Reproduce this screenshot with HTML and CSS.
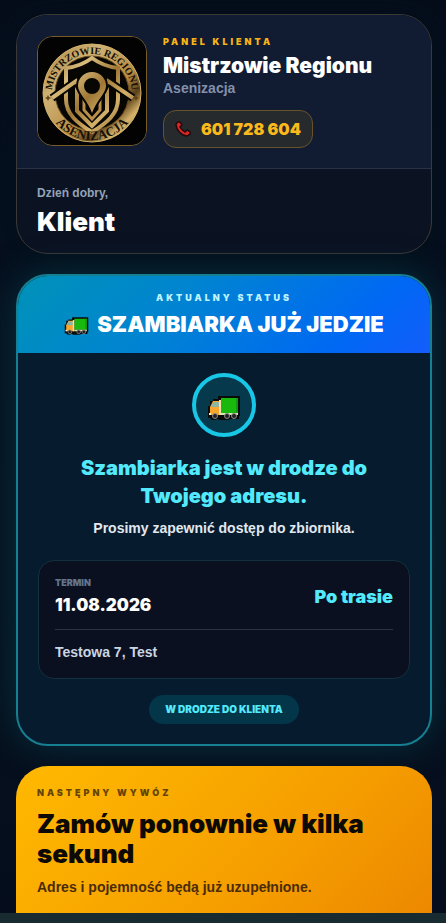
FILE: index.html
```html
<!DOCTYPE html>
<html lang="pl">
<head>
    <meta charset="UTF-8">
    <meta name="viewport" content="width=device-width, initial-scale=1.0">
    <title>Panel klienta - Mistrzowie Regionu</title>
    <link rel="stylesheet" href="styles.css">
</head>
<body>

    <!-- shared truck icon -->
    <svg class="sprite" aria-hidden="true">
        <symbol id="truck" viewBox="0 0 34 26">
            <path d="M1 11h2V6h3V4h5V1h22v20h-1v3h-9l-1 1H12l-1-1H10l-2 1H5l-2-2H1z" fill="#080b08"/>
            <path d="M14 3h17v15H14z" fill="#18b90c"/>
            <path d="M29 3h2v15h-2z" fill="#0c9a12"/>
            <path d="M3 12l3-6h7v14H3z" fill="#f8a72c"/>
            <path d="M6 7h6v5H4z" fill="#8db6a2"/>
            <path d="M12 5h2v15h-2z" fill="#f4dfaa"/>
            <path d="M14 18h17v2H14z" fill="#d5e8ad"/>
            <path d="M2 18h2v2H2z" fill="#fff0bd"/>
            <g fill="#222" stroke="#8d898e" stroke-width="1">
                <circle cx="8" cy="21" r="2.5"/>
                <circle cx="20" cy="21" r="2.5"/>
                <circle cx="27" cy="21" r="2.5"/>
            </g>
        </symbol>
    </svg>

    <main class="container">
        <header class="card client-card">
            <div class="brand">
                <svg class="logo" viewBox="0 0 108 108" role="img" aria-label="Mistrzowie Regionu Asenizacja">
                    <defs>
                        <linearGradient id="gold" gradientUnits="userSpaceOnUse" x1="15" y1="20" x2="90" y2="95">
                            <stop offset="0" stop-color="#a07a38"/>
                            <stop offset=".25" stop-color="#d9bc7c"/>
                            <stop offset=".5" stop-color="#9f7734"/>
                            <stop offset=".72" stop-color="#d3b06a"/>
                            <stop offset="1" stop-color="#80591f"/>
                        </linearGradient>
                        <linearGradient id="ring" x1="0" y1="0" x2="1" y2="1">
                            <stop offset="0" stop-color="#a98646"/>
                            <stop offset=".3" stop-color="#cfb275"/>
                            <stop offset=".6" stop-color="#b78c42"/>
                            <stop offset=".72" stop-color="#5a401b"/>
                            <stop offset=".82" stop-color="#d5b269"/>
                            <stop offset="1" stop-color="#94702f"/>
                        </linearGradient>
                        <path id="arcTop" d="M14 57a40 40 0 0 1 80 0"/>
                        <path id="arcBottom" d="M7 56a47 47 0 0 0 94 0"/>
                    </defs>
                    <rect width="108" height="108" fill="#030303"/>
                    <circle cx="54" cy="56" r="49" fill="url(#ring)" stroke="#d3b26c"/>
                    <circle cx="54" cy="56" r="37" fill="#080603" stroke="#6c4d1d"/>
                    <!-- shield -->
                    <path d="M54 21c8 6 17 9 26 10v31c0 15-11 24-26 33-15-9-26-18-26-33V31c9-1 18-4 26-10z" fill="#080603" stroke="url(#gold)" stroke-width="4"/>
                    <path d="M39 47v27l15 15 15-15V47" fill="none" stroke="url(#gold)" stroke-width="4"/>
                    <path d="M46 59v14l8 9 8-9V59" fill="none" stroke="#b98f48" stroke-width="3"/>
                    <!-- roofs -->
                    <path d="M14 61l24-17 16 26 16-26 25 17" fill="none" stroke="#080603" stroke-width="8"/>
                    <path d="M14 61l24-17 16 26 16-26 25 17" fill="none" stroke="url(#gold)" stroke-width="4"/>
                    <!-- pin -->
                    <path d="M54 33a16 16 0 0 0-16 16c0 9 12 17 16 30 4-13 16-21 16-30a16 16 0 0 0-16-16z" fill="#080603"/>
                    <path d="M54 35a14 14 0 0 0-14 14c0 7 10 15 14 27 4-12 14-20 14-27a14 14 0 0 0-14-14zm0 6a8 8 0 0 1 0 16 8 8 0 0 1 0-16z" fill="url(#gold)" fill-rule="evenodd"/>
                    <text class="logo-top"><textPath href="#arcTop" startOffset="50%">MISTRZOWIE REGIONU</textPath></text>
                    <text class="logo-bottom"><textPath href="#arcBottom" startOffset="50%">ASENIZACJA</textPath></text>
                    <path d="M10 58l1 2 2 1-2 1-1 2-1-2-2-1 2-1zM98 58l1 2 2 1-2 1-1 2-1-2-2-1 2-1z" fill="#614516"/>
                </svg>
                <div class="brand-text">
                    <p class="eyebrow">PANEL KLIENTA</p>
                    <h1>Mistrzowie Regionu</h1>
                    <p class="subtitle">Asenizacja</p>
                    <a href="tel:601728604" class="phone-btn">
                        <svg viewBox="0 0 16 16" class="phone-icon" aria-hidden="true">
                            <path d="M3 1L1 3c0 6 6 12 11 12l3-2v-2l-3-2-2 2C8 10 6 8 5 6l2-2-2-3z" fill="#df2526" stroke="#210b0d" stroke-width="1.5"/>
                        </svg>
                        601 728 604
                    </a>
                </div>
            </div>
            <div class="greeting">
                <p>Dzień dobry,</p>
                <h2>Klient</h2>
            </div>
        </header>

        <section class="card status-card">
            <div class="status-head">
                <p class="eyebrow">AKTUALNY STATUS</p>
                <h2><svg class="truck-small" aria-hidden="true"><use href="#truck"/></svg>SZAMBIARKA JUŻ JEDZIE</h2>
            </div>
            <div class="status-body">
                <div class="status-icon">
                    <svg class="truck-large" aria-hidden="true"><use href="#truck"/></svg>
                </div>
                <h3>Szambiarka jest w drodze do Twojego adresu.</h3>
                <p class="hint">Prosimy zapewnić dostęp do zbiornika.</p>
                <div class="details">
                    <div class="details-row">
                        <div>
                            <p class="label">TERMIN</p>
                            <p class="date">11.08.2026</p>
                        </div>
                        <p class="time">Po trasie</p>
                    </div>
                    <p class="address">Testowa 7, Test</p>
                </div>
                <span class="pill">W DRODZE DO KLIENTA</span>
            </div>
        </section>

        <section class="order-card">
            <p class="eyebrow">NASTĘPNY WYWÓZ</p>
            <h2>Zamów ponownie w kilka sekund</h2>
            <p class="order-text">Adres i pojemność będą już uzupełnione.</p>
        </section>
    </main>

    <div class="bottom-bar"></div>

</body>
</html>
```

FILE: styles.css
```css
* {
    box-sizing: border-box;
}

body {
    font-family: "Liberation Sans", Arial, sans-serif;
    font-weight: bold;
    background: linear-gradient(#050d1b, #06101f 30%, #061220 60%, #050d1c);
    color: #fff;
    height: 100vh;
    margin: 0;
    overflow: hidden;
}

h1, h2, h3, p {
    margin: 0;
}

h1, h2, h3, .eyebrow, .phone-btn, .label, .date, .time, .pill {
    font-family: "Arial Black", Inter, sans-serif;
    font-weight: 900;
}

.sprite {
    display: none;
}

.container {
    display: flex;
    flex-direction: column;
    gap: 20px;
    height: 100%;
    padding: 14px 14px 0 16px;
    overflow: hidden;
}

.card {
    flex: none;
    border-radius: 32px;
    overflow: hidden;
}

.eyebrow {
    font-size: 9px;
    line-height: 16px;
    letter-spacing: 3px;
}

/* client header */
.client-card {
    border: 1px solid #3c3a37;
    background: #0b1222;
    box-shadow: 0 8px 30px #03111c;
}

.brand {
    display: flex;
    gap: 16px;
    padding: 21px 20px 22px;
    background: #111b32;
    border-bottom: 1px solid #293345;
}

.logo {
    flex: none;
    width: 110px;
    height: 110px;
    border: 1px solid #795c23;
    border-radius: 16px;
}

.logo text {
    font-family: "Liberation Serif", serif;
    text-anchor: middle;
    fill: #171006;
}

.logo-top {
    font-size: 10px;
}

.logo-bottom {
    font-size: 13px;
}

.brand-text {
    min-width: 0;
    height: 110px;
}

.brand .eyebrow {
    color: #f9b414;
    line-height: 12px;
}

h1 {
    font-size: 21px;
    line-height: 28px;
    margin-top: 4px;
    white-space: nowrap;
}

.subtitle {
    font-size: 14px;
    line-height: 16px;
    color: #8390a9;
    margin-bottom: 14px;
}

.phone-btn {
    display: inline-flex;
    align-items: center;
    gap: 10px;
    height: 38px;
    padding: 0 11px;
    border: 1px solid #67532a;
    border-radius: 13px;
    background: #262a2d;
    color: #fbb91c;
    font-size: 16px;
    text-decoration: none;
    white-space: nowrap;
}

.phone-icon {
    width: 16px;
    height: 16px;
}

.greeting {
    padding: 16px 20px 15px;
}

.greeting p {
    font-size: 12px;
    line-height: 16px;
    color: #94a3b8;
}

.greeting h2 {
    font-size: 26px;
    line-height: 32px;
    margin-top: 5px;
}

/* current status */
.status-card {
    border: 2px solid #167f91;
    background: #061c2e;
    box-shadow: 0 0 35px #07303e;
    text-align: center;
}

.status-head {
    padding: 14px 20px 13px;
    background: linear-gradient(135deg, #0092b8, #0084d1 38%, #0068f4 80%, #155dfc);
}

.status-head .eyebrow {
    color: #bff4ff;
}

.status-head h2 {
    display: flex;
    align-items: center;
    justify-content: center;
    gap: 8px;
    font-size: 22px;
    line-height: 32px;
    margin-top: 2px;
    white-space: nowrap;
}

.truck-small {
    width: 25px;
    height: 20px;
    margin-top: 4px;
}

.status-body {
    padding: 20px;
}

.status-icon {
    display: flex;
    align-items: center;
    justify-content: center;
    width: 64px;
    height: 64px;
    margin: 0 auto 17px;
    border: 4px solid #18c7e6;
    border-radius: 50%;
    background: #06394c;
}

.truck-large {
    width: 34px;
    height: 26px;
    margin-top: 6px;
}

h3 {
    color: #53eafd;
    font-size: 20px;
    line-height: 28px;
    padding: 0 24px;
}

.hint {
    font-size: 14px;
    line-height: 20px;
    margin-top: 8px;
    color: #e2e8f0;
}

.details {
    margin: 22px 0 16px;
    padding: 16px;
    border: 1px solid #12313e;
    border-radius: 16px;
    background: #0a1020;
    text-align: left;
}

.details-row {
    display: flex;
    align-items: center;
    justify-content: space-between;
    padding-bottom: 12px;
    border-bottom: 1px solid #2b3442;
}

.label {
    font-size: 9px;
    line-height: 12px;
    color: #62748e;
}

.date {
    font-size: 17px;
    line-height: 24px;
    margin-top: 4px;
}

.time {
    font-size: 18px;
    line-height: 24px;
    color: #53eafd;
}

.address {
    font-size: 14px;
    line-height: 20px;
    margin-top: 12px;
    color: #cad5e2;
}

.pill {
    display: inline-block;
    vertical-align: top;
    padding: 0 16px;
    border-radius: 15px;
    background: #04364a;
    color: #53eafd;
    font-size: 10px;
    line-height: 29px;
}

/* order again */
.order-card {
    flex: none;
    height: 240px;
    padding: 19px 21px;
    border-radius: 32px;
    background: linear-gradient(135deg, #ffb900, #f59d00 55%, #e97f00);
    color: #0c0906;
}

.order-card .eyebrow {
    color: #644508;
}

.order-card h2 {
    font-size: 26px;
    line-height: 30px;
    margin-top: 8px;
}

.order-text {
    font-size: 14px;
    line-height: 20px;
    margin-top: 8px;
    color: #4a2b08;
}

.bottom-bar {
    position: fixed;
    left: 0;
    right: 0;
    bottom: 0;
    height: 10px;
    background: #182b30;
}
```
